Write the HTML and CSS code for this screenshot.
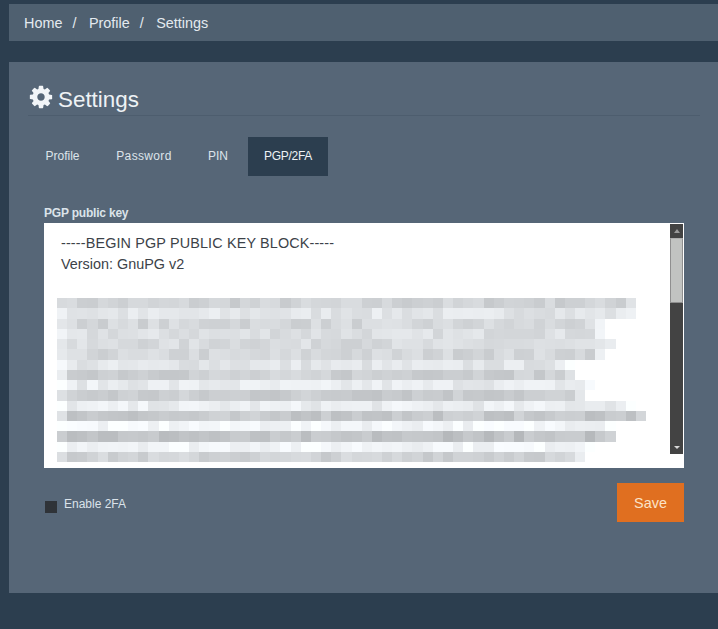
FILE: index.html
```html
<!DOCTYPE html>
<html lang="en">
<head>
    <meta charset="UTF-8">
    <meta name="viewport" content="width=device-width, initial-scale=1.0">
    <title>Settings</title>
    <link rel="stylesheet" href="styles.css">
</head>
<body>
    <nav class="breadcrumb">
        <a href="#">Home</a><span class="sep">/</span>
        <a href="#">Profile</a><span class="sep">/</span>
        <span>Settings</span>
    </nav>

    <main class="panel">
        <h1 class="panel-title">
            <svg class="gear" viewBox="0 0 1792 1792" aria-hidden="true"><path d="M1152 896q0-106-75-181t-181-75-181 75-75 181 75 181 181 75 181-75 75-181zm512-109v222q0 12-8 23t-20 13l-185 28q-19 54-39 91 35 50 107 138 10 12 10 25t-9 23q-27 37-99 108t-94 71q-12 0-26-9l-138-108q-44 23-91 38-16 136-29 186-7 28-36 28h-222q-14 0-24.5-8.5t-11.5-21.5l-28-184q-49-16-90-37l-141 107q-10 9-25 9-14 0-25-11-126-114-165-168-7-10-7-23 0-12 8-23 15-21 51-66.5t54-70.5q-27-50-41-99l-183-27q-13-2-21-12.5t-8-23.5v-222q0-12 8-23t19-13l186-28q14-46 39-92-40-57-107-138-10-12-10-24 0-10 9-23 26-36 98.5-107.5t94.5-71.5q13 0 26 10l138 107q44-23 91-38 16-136 29-186 7-28 36-28h222q14 0 24.5 8.5t11.5 21.5l28 184q49 16 90 37l142-107q9-9 24-9 13 0 25 10 129 119 165 170 7 8 7 22 0 12-8 23-15 21-51 66.5t-54 70.5q26 50 41 98l183 28q13 2 21 12.5t8 23.5z"/></svg>
            Settings
        </h1>

        <ul class="tabs">
            <li class="tab-profile"><a href="#">Profile</a></li>
            <li class="tab-password"><a href="#">Password</a></li>
            <li class="tab-pin"><a href="#">PIN</a></li>
            <li class="tab-pgp"><a href="#" class="active">PGP/2FA</a></li>
        </ul>

        <form class="pgp-form">
            <label class="key-label">PGP public key</label>
            <div class="key-box">
                <div class="key-text">
                    <p class="key-begin">-----BEGIN PGP PUBLIC KEY BLOCK-----</p>
                    <p>Version: GnuPG v2</p>
                    <div class="mosaic" id="mosaic"></div>
                </div>
                <div class="scrollbar">
                    <span class="arrow arrow-up"></span>
                    <span class="thumb"></span>
                    <span class="track"></span>
                    <span class="arrow arrow-down"></span>
                </div>
            </div>
            <div class="form-foot">
                <label class="check"><span class="check-box"></span>Enable 2FA</label>
                <button type="button" class="save">Save</button>
            </div>
        </form>
    </main>

    <script src="mosaic.js"></script>
</body>
</html>
```

FILE: styles.css
```css
/* Global */
html, body {
    height: 100%;
    overflow: hidden;
}

body {
    margin: 0;
    padding: 4px 0 0 9px;
    box-sizing: border-box;
    background-color: #2c3e4f;
    font-family: "Liberation Sans", Arial, sans-serif;
    color: #e4eaef;
}

a {
    color: inherit;
    text-decoration: none;
}

/* Breadcrumb */
.breadcrumb {
    height: 37px;
    padding-left: 15px;
    display: flex;
    align-items: center;
    background-color: #4f6070;
    font-size: 14.4px;
    margin-bottom: 21px;
}

.breadcrumb .sep {
    margin: 0 12.5px 0 10px;
}

/* Panel */
.panel {
    height: 531px;
    box-sizing: border-box;
    padding: 20px 34px 0 21px;
    background-color: #566677;
}

.panel-title {
    display: flex;
    align-items: center;
    gap: 4px;
    height: 34px;
    margin: 0 -16px 0 -2px;
    padding: 3px 0 0 0;
    box-sizing: border-box;
    font-size: 22.4px;
    font-weight: normal;
    color: #eef2f5;
    border-bottom: 1px solid #4d5d6e;
}

.gear {
    width: 26px;
    height: 26px;
    margin: -7px 0 0 0;
    fill: #f2f5f8;
}

/* Tabs */
.tabs {
    list-style: none;
    display: flex;
    gap: 4px;
    margin: 21px 0 0 -1px;
    padding: 0;
    font-size: 12px;
    text-align: center;
}

.tab-profile { width: 67px; }
.tab-password { width: 88px; }
.tab-pin { width: 52px; }
.tab-pgp { width: 80px; }

.tab-password a { letter-spacing: 0.35px; }
.tab-pgp a { letter-spacing: -0.3px; }

.tabs a {
    display: block;
    line-height: 39px;
    color: #dde4ea;
}

.tabs a.active {
    background-color: #2c3e4f;
    color: #eef2f5;
}

/* Form */
.pgp-form {
    margin: 30px 0 0 14px;
}

.key-label {
    display: block;
    font-size: 12px;
    font-weight: bold;
    letter-spacing: -0.2px;
    line-height: 14px;
    margin-bottom: 3px;
    color: #dbe3ea;
}

.key-box {
    display: flex;
    align-items: flex-start;
    height: 245px;
    box-sizing: border-box;
    padding: 1px 1px 0 0;
    background-color: #fff;
}

.key-text {
    flex: 1;
    align-self: stretch;
    padding: 9px 0 0 17px;
    overflow: hidden;
    font-size: 14.4px;
    line-height: 21px;
    color: #3c4248;
}

.key-text p {
    margin: 0;
}

.key-begin {
    letter-spacing: 0.14px;
}

.mosaic {
    margin: 23px 0 0 -4px;
    filter: blur(0.4px);
}

.mosaic-row {
    display: flex;
    height: 10.25px;
}

.mosaic-cell {
    flex: none;
    width: 10.16px;
}

/* Scrollbar */
.scrollbar {
    flex: none;
    width: 13px;
    height: 230px;
    display: flex;
    flex-direction: column;
    background-color: #434343;
}

.arrow {
    flex: none;
    height: 13px;
    display: flex;
    justify-content: center;
    align-items: center;
}

.arrow::before {
    content: "";
    border-left: 3px solid transparent;
    border-right: 3px solid transparent;
}

.arrow-up::before {
    border-bottom: 4px solid #9a9a9a;
}

.arrow-down::before {
    border-top: 3px solid #d8d8d8;
}

.thumb {
    flex: none;
    height: 65px;
    box-sizing: border-box;
    margin-top: 1px;
    background-color: #c1c3c1;
    border: 1px solid #8f8f8f;
    border-top-color: #b0b0b0;
}

.track {
    flex: 1;
}

/* Footer row of the form */
.form-foot {
    display: flex;
    justify-content: space-between;
    align-items: flex-start;
    margin-top: 15px;
}

.check {
    display: flex;
    align-items: flex-start;
    gap: 7px;
    margin: 14px 0 0 1px;
    font-size: 12px;
    line-height: 14px;
    color: #dbe3ea;
}

.check-box {
    width: 12px;
    height: 12px;
    margin-top: 4px;
    background-color: #2f3338;
}

.save {
    width: 67px;
    height: 39px;
    padding: 0;
    border: 0;
    background-color: #e06f20;
    color: #fbe3c8;
    font-family: inherit;
    font-size: 14.4px;
}
```

FILE: mosaic.js
```js
// blurred key block: [cells in row, base grey level]
var rows = [
    [57, 208], [57, 226], [54, 212], [54, 220], [55, 216], [54, 212],
    [51, 226], [51, 206], [53, 232], [52, 202], [57, 234], [58, 198],
    [55, 244], [55, 192], [53, 244], [52, 208]
];

var seed = 7;
function noise() {
    seed = (seed * 16807) % 2147483647;
    return seed / 2147483647;
}

var mosaic = document.getElementById('mosaic');

rows.forEach(function (row) {
    var el = document.createElement('div');
    el.className = 'mosaic-row';
    for (var i = 0; i < row[0]; i++) {
        var cell = document.createElement('span');
        var level = row[1] + Math.round((noise() - 0.5) * 22);
        // left and right edges fade out
        if (i === 0 || i === row[0] - 1) level += 18;
        level = Math.min(level, 252);
        cell.className = 'mosaic-cell';
        cell.style.backgroundColor = 'rgb(' + level + ',' + (level + 3) + ',' + (level + 6) + ')';
        el.appendChild(cell);
    }
    mosaic.appendChild(el);
});
```
